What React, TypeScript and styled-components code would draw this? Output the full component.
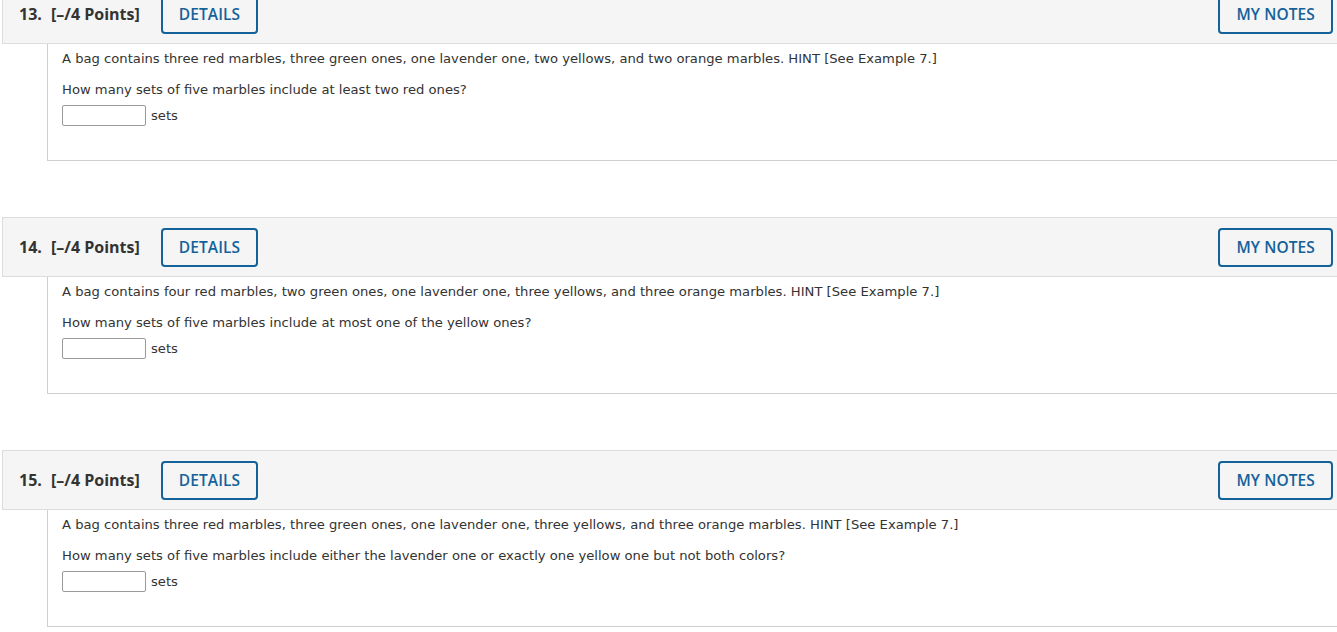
import React from "react";
import styled, { createGlobalStyle } from "styled-components";

const Global = createGlobalStyle`
  html, body { margin: 0; padding: 0; background: #fff; overflow: hidden; }
`;

const Page = styled.div`
  margin-top: -16px;
  padding-left: 2px;
  width: 1347px;
  display: flex;
  flex-direction: column;
  gap: 56px;
`;

const Question = styled.section`
  display: flex;
  flex-direction: column;
`;

const Header = styled.div`
  box-sizing: border-box;
  height: 60px;
  background: #f5f5f5;
  border: 1px solid #dcdcdc;
  display: flex;
  align-items: center;
  padding: 0 15px 0 16px;
  font-family: "Open Sans", "Liberation Sans", sans-serif;
  color: #333;
`;

const Num = styled.span`
  font-weight: 700;
  font-size: 16px;
  width: 32px;
`;

const Points = styled.span`
  font-weight: 700;
  font-size: 16px;
  margin-right: 21px;
`;

const Button = styled.button<{ $push?: boolean }>`
  box-sizing: border-box;
  height: 39px;
  padding: 0 16px;
  margin-left: ${(p) => (p.$push ? "auto" : "0")};
  background: #f5f5f5;
  border: 2px solid #14629a;
  border-radius: 4px;
  color: #14629a;
  font-family: "Open Sans", "Liberation Sans", sans-serif;
  font-weight: 600;
  font-size: 15.5px;
  letter-spacing: 0.1px;
  cursor: pointer;
`;

const Body = styled.div`
  box-sizing: border-box;
  height: 117px;
  margin-left: 45px;
  border-left: 1px solid #cfcfcf;
  border-bottom: 1px solid #cfcfcf;
  padding: 7px 0 0 14px;
  font-family: "DejaVu Sans", Verdana, sans-serif;
  font-size: 13.15px;
  color: #333;
`;

const Para = styled.p`
  margin: 0 0 15px;
  line-height: 16px;
`;

const AnswerRow = styled.div`
  display: flex;
  align-items: center;
  margin-top: -8px;
  gap: 5px;
`;

const Input = styled.input`
  box-sizing: border-box;
  width: 84px;
  height: 21px;
  border: 1px solid #9a9a9a;
  border-radius: 2px;
  margin: 0;
  padding: 0 3px;
  background: #fff;
`;

const Unit = styled.span`
  line-height: 16px;
`;

const questions = [
  {
    n: 13,
    text: "A bag contains three red marbles, three green ones, one lavender one, two yellows, and two orange marbles. HINT [See Example 7.]",
    ask: "How many sets of five marbles include at least two red ones?",
  },
  {
    n: 14,
    text: "A bag contains four red marbles, two green ones, one lavender one, three yellows, and three orange marbles. HINT [See Example 7.]",
    ask: "How many sets of five marbles include at most one of the yellow ones?",
  },
  {
    n: 15,
    text: "A bag contains three red marbles, three green ones, one lavender one, three yellows, and three orange marbles. HINT [See Example 7.]",
    ask: "How many sets of five marbles include either the lavender one or exactly one yellow one but not both colors?",
  },
];

export default function App() {
  return (
    <>
      <Global />
      <Page>
        {questions.map((q) => (
          <Question key={q.n}>
            <Header>
              <Num>{q.n}.</Num>
              <Points>[–/4 Points]</Points>
              <Button>DETAILS</Button>
              <Button $push>MY NOTES</Button>
            </Header>
            <Body>
              <Para>{q.text}</Para>
              <Para>{q.ask}</Para>
              <AnswerRow>
                <Input type="text" />
                <Unit>sets</Unit>
              </AnswerRow>
            </Body>
          </Question>
        ))}
      </Page>
    </>
  );
}
